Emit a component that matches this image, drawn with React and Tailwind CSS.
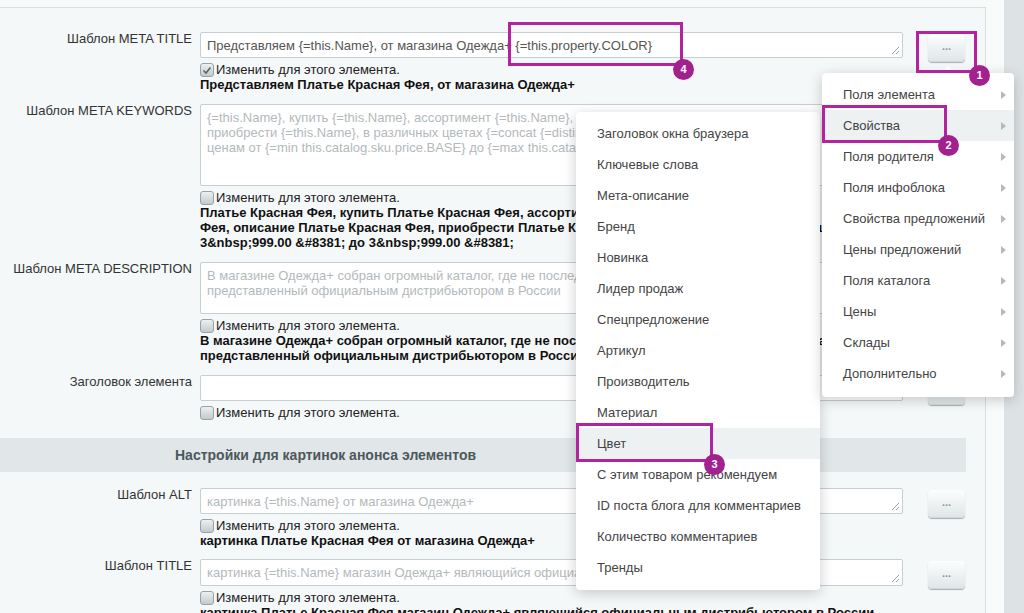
import React from "react";

const PROPS = [
  "Заголовок окна браузера",
  "Ключевые слова",
  "Мета-описание",
  "Бренд",
  "Новинка",
  "Лидер продаж",
  "Спецпредложение",
  "Артикул",
  "Производитель",
  "Материал",
  "Цвет",
  "С этим товаром рекомендуем",
  "ID поста блога для комментариев",
  "Количество комментариев",
  "Тренды",
];

const GROUPS = [
  "Поля элемента",
  "Свойства",
  "Поля родителя",
  "Поля инфоблока",
  "Свойства предложений",
  "Цены предложений",
  "Поля каталога",
  "Цены",
  "Склады",
  "Дополнительно",
];

function ResizeHandle() {
  return (
    <svg className="absolute bottom-[2px] right-[2px]" width="9" height="9" viewBox="0 0 9 9">
      <path d="M8 1 L1 8 M8 5 L5 8" stroke="#9aa3a7" strokeWidth="1" />
    </svg>
  );
}

function Checkbox({ checked }) {
  return (
    <span className="mr-[2px] flex h-[14px] w-[14px] items-center justify-center rounded-[3px] border border-[#98a2a6] bg-gradient-to-b from-[#eef0f1] to-[#c3c9cc]">
      {checked && (
        <svg width="10" height="9" viewBox="0 0 10 9">
          <path d="M1.5 4.5 L4 7 L8.5 1.5" fill="none" stroke="#5b6366" strokeWidth="1.6" />
        </svg>
      )}
    </span>
  );
}

function DotsButton() {
  return (
    <div className="flex h-[28px] w-[37px] items-center justify-center rounded-[4px] bg-gradient-to-b from-[#fdfefe] to-[#dfe5e7] pb-[3px] text-[11px] font-bold text-[#8a9296] shadow-[0_1px_1px_rgba(0,0,0,0.3),inset_0_-1px_0_rgba(0,0,0,0.06)]">
      ...
    </div>
  );
}

function Row({ label, height, lines = [], filled, checked, bold = [], mt }) {
  return (
    <div className={`flex ${mt}`}>
      <div className="-mt-[1px] w-[192px] shrink-0 text-right leading-[15px] text-[#333]">{label}</div>
      <div className="ml-[8px] w-[703px] shrink-0">
        <div
          className={`relative ${height} overflow-hidden whitespace-nowrap rounded-[2px] border border-[#c6cfd2] bg-white px-[6px] pt-[5px] leading-[15px] ${
            filled ? "text-[#555]" : "text-[#b3b9bc]"
          }`}
        >
          {lines.map((l, i) => (
            <div key={i}>{l}</div>
          ))}
          <ResizeHandle />
        </div>
        <div className="mt-[5px] flex h-[14px] items-center leading-[14px] text-[#222]">
          <Checkbox checked={checked} />
          Изменить для этого элемента.
        </div>
        {bold.map((b, i) => (
          <div key={i} className="whitespace-nowrap font-bold leading-[15px] text-[#111]">
            {b}
          </div>
        ))}
      </div>
      <div className="ml-[25px] pt-[2px]">
        <DotsButton />
      </div>
    </div>
  );
}

function Badge({ n, className }) {
  return (
    <div
      className={`absolute flex h-[21px] w-[21px] items-center justify-center rounded-full bg-[#a3218f] text-[11px] font-bold text-white ${className}`}
    >
      {n}
    </div>
  );
}

export default function App() {
  return (
    <div className="relative flex h-[613px] w-[1024px] overflow-hidden bg-[#dde3e5] font-['Liberation_Sans',Arial,sans-serif] text-[13px]">
      <div className="w-[1004px] shrink-0 bg-[#f9fafa] pt-[7px]">
        <div className="h-full w-[986px] border-r border-t border-[#d9e0e2] bg-[#f5f8f9] pt-[24px]">
          <Row
            label="Шаблон META TITLE"
            height="h-[26px]"
            filled
            checked
            lines={["Представляем {=this.Name}, от магазина Одежда+ {=this.property.COLOR}"]}
            bold={["Представляем Платье Красная Фея, от магазина Одежда+"]}
          />
          <Row
            label="Шаблон META KEYWORDS"
            height="h-[82px]"
            mt="mt-[12px]"
            lines={[
              "{=this.Name}, купить {=this.Name}, ассортимент {=this.Name}, описание {=this.Name},",
              "приобрести {=this.Name}, в различных цветах {=concat {=distinct this.catalog.sku.property.COLOR}",
              "ценам от {=min this.catalog.sku.price.BASE} до {=max this.catalog.sku.price.BASE}",
            ]}
            bold={[
              "Платье Красная Фея, купить Платье Красная Фея, ассортимент Платье Красная Фея, описание",
              "Фея, описание Платье Красная Фея, приобрести Платье Красная Фея, в различных цветах , по ценам от",
              "3&nbsp;999.00 &#8381; до 3&nbsp;999.00 &#8381;",
            ]}
          />
          <Row
            label="Шаблон META DESCRIPTION"
            height="h-[52px]"
            mt="mt-[12px]"
            lines={[
              "В магазине Одежда+ собран огромный каталог, где не последнее место занимает {=this.Name},",
              "представленный официальным дистрибьютором в России",
            ]}
            bold={[
              "В магазине Одежда+ собран огромный каталог, где не последнее место занимает Платье Красная Фея,",
              "представленный официальным дистрибьютором в России",
            ]}
          />
          <Row label="Заголовок элемента" height="h-[26px]" mt="mt-[12px]" lines={[]} />

          <div className="mt-[18px] h-[34px] w-[966px] bg-[#e1e7e9] pl-[175px] text-[14px] font-bold leading-[34px] text-[#4d585c]">
            Настройки для картинок анонса элементов
          </div>

          <Row
            label="Шаблон ALT"
            height="h-[26px]"
            mt="mt-[16px]"
            lines={["картинка {=this.Name} от магазина Одежда+"]}
            bold={["картинка Платье Красная Фея от магазина Одежда+"]}
          />
          <Row
            label="Шаблон TITLE"
            height="h-[27px]"
            mt="mt-[11px]"
            lines={["картинка {=this.Name} магазин Одежда+ являющийся официальным дистрибьютором в России"]}
            bold={["картинка Платье Красная Фея магазин Одежда+ являющийся официальным дистрибьютором в России"]}
          />
        </div>
      </div>

      {/* property submenu */}
      <div className="absolute left-[576px] top-[112px] w-[244px] rounded-[4px] bg-white pb-[7px] pt-[6px] text-[#444] shadow-[0_3px_14px_rgba(0,0,0,0.2)]">
        {PROPS.map((p) => (
          <div key={p} className={`flex h-[31px] items-center pl-[21px] ${p === "Цвет" ? "bg-[#edf1f2]" : ""}`}>
            {p}
          </div>
        ))}
      </div>

      {/* group menu */}
      <div className="absolute left-[822px] top-[73px] w-[192px] rounded-[4px] bg-white pb-[8px] pt-[6px] text-[#444] shadow-[0_3px_14px_rgba(0,0,0,0.2)]">
        <div className="absolute left-[121px] top-[-5px] h-[10px] w-[10px] rotate-45 bg-white" />
        {GROUPS.map((g) => (
          <div
            key={g}
            className={`relative flex h-[31px] items-center justify-between pl-[21px] pr-[8px] ${
              g === "Свойства" ? "bg-[#edf1f2]" : ""
            }`}
          >
            {g}
            <svg width="5" height="8" viewBox="0 0 5 8">
              <path d="M0 0 L5 4 L0 8 Z" fill="#b3b9bc" />
            </svg>
          </div>
        ))}
      </div>

      {/* annotations */}
      <div className="absolute left-[508px] top-[22px] h-[44px] w-[175px] border-[3px] border-[#b3239f]" />
      <Badge n="4" className="left-[673px] top-[59px]" />
      <div className="absolute left-[916px] top-[31px] h-[42px] w-[61px] border-[3px] border-[#b3239f]" />
      <Badge n="1" className="left-[969px] top-[65px]" />
      <div className="absolute left-[822px] top-[105px] h-[38px] w-[125px] border-[3px] border-[#b3239f]" />
      <Badge n="2" className="left-[938px] top-[135px]" />
      <div className="absolute left-[576px] top-[423px] h-[39px] w-[137px] border-[3px] border-[#b3239f]" />
      <Badge n="3" className="left-[704px] top-[454px]" />
    </div>
  );
}
